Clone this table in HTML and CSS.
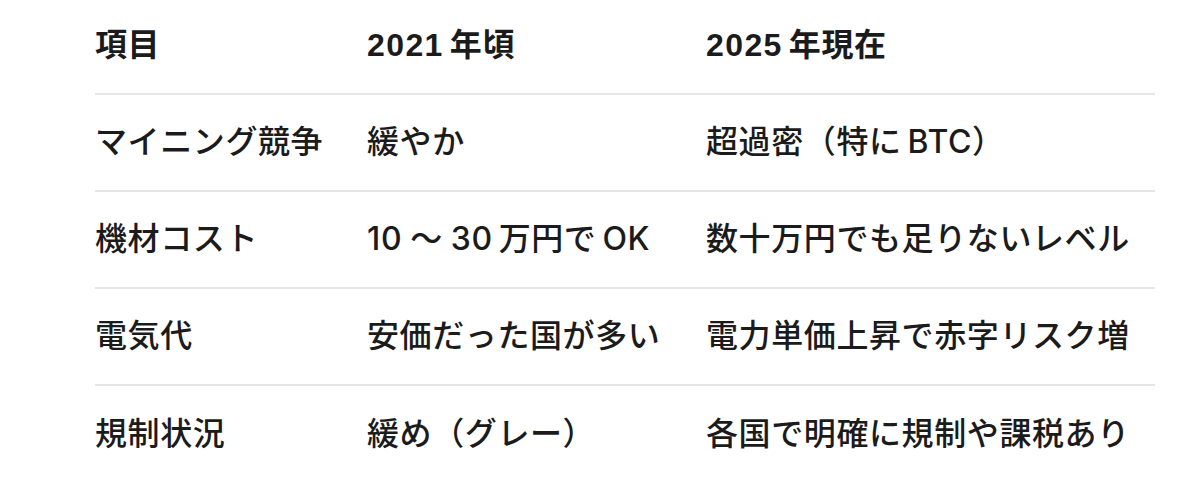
FILE: index.html
```html
<!DOCTYPE html>
<html lang="ja">
<head>
<meta charset="utf-8">
<title>比較表</title>
<link rel="stylesheet" href="styles.css">
</head>
<body>
<div class="table">
  <div class="row head">
    <div class="cell">項目</div>
    <div class="cell"><span class="lat first">2021</span>年頃</div>
    <div class="cell"><span class="lat first">2025</span>年現在</div>
  </div>
  <div class="row">
    <div class="cell">マイニング競争</div>
    <div class="cell">緩やか</div>
    <div class="cell">超過密（特に<span class="lat end">BTC</span>）</div>
  </div>
  <div class="row">
    <div class="cell">機材コスト</div>
    <div class="cell"><span class="lat first end">10</span><span class="wave">〜</span><span class="lat first">30</span>万円で<span class="lat end">OK</span></div>
    <div class="cell">数十万円でも足りないレベル</div>
  </div>
  <div class="row">
    <div class="cell">電気代</div>
    <div class="cell">安価だった国が多い</div>
    <div class="cell">電力単価上昇で赤字リスク増</div>
  </div>
  <div class="row last">
    <div class="cell">規制状況</div>
    <div class="cell">緩め（グレー）</div>
    <div class="cell">各国で明確に規制や課税あり</div>
  </div>
</div>
</body>
</html>
```

FILE: styles.css
```css
html, body {
  margin: 0;
  padding: 0;
  background: #ffffff;
}

body {
  font-family: "Inter", "Noto Sans CJK JP Medium", "Noto Sans CJK JP", sans-serif;
  color: #1b1b1b;
  font-size: 32px;
  letter-spacing: 0.6px;
  font-weight: 500;
}

.table {
  margin-left: 95px;
  width: 1060px;
}

.row {
  display: grid;
  grid-template-columns: 272px 339px 1fr;
  align-items: center;
  height: 97px;
  border-bottom: 2px solid #e6e6e6;
  box-sizing: border-box;
}

.row.head {
  height: 95px;
  padding-bottom: 3px;
  font-weight: 700;
  font-family: "Liberation Sans", "Noto Sans CJK JP", sans-serif;
}

.row.head .lat {
  letter-spacing: 1.4px;
}

.row.last {
  border-bottom: none;
}

.cell {
  white-space: nowrap;
  line-height: 1.2;
}

.lat {
  margin: 0 6px;
}

.lat.first {
  margin-left: 0;
}

.lat.end {
  margin-right: 0;
}

.wave {
  margin: 0 8px;
}
```
